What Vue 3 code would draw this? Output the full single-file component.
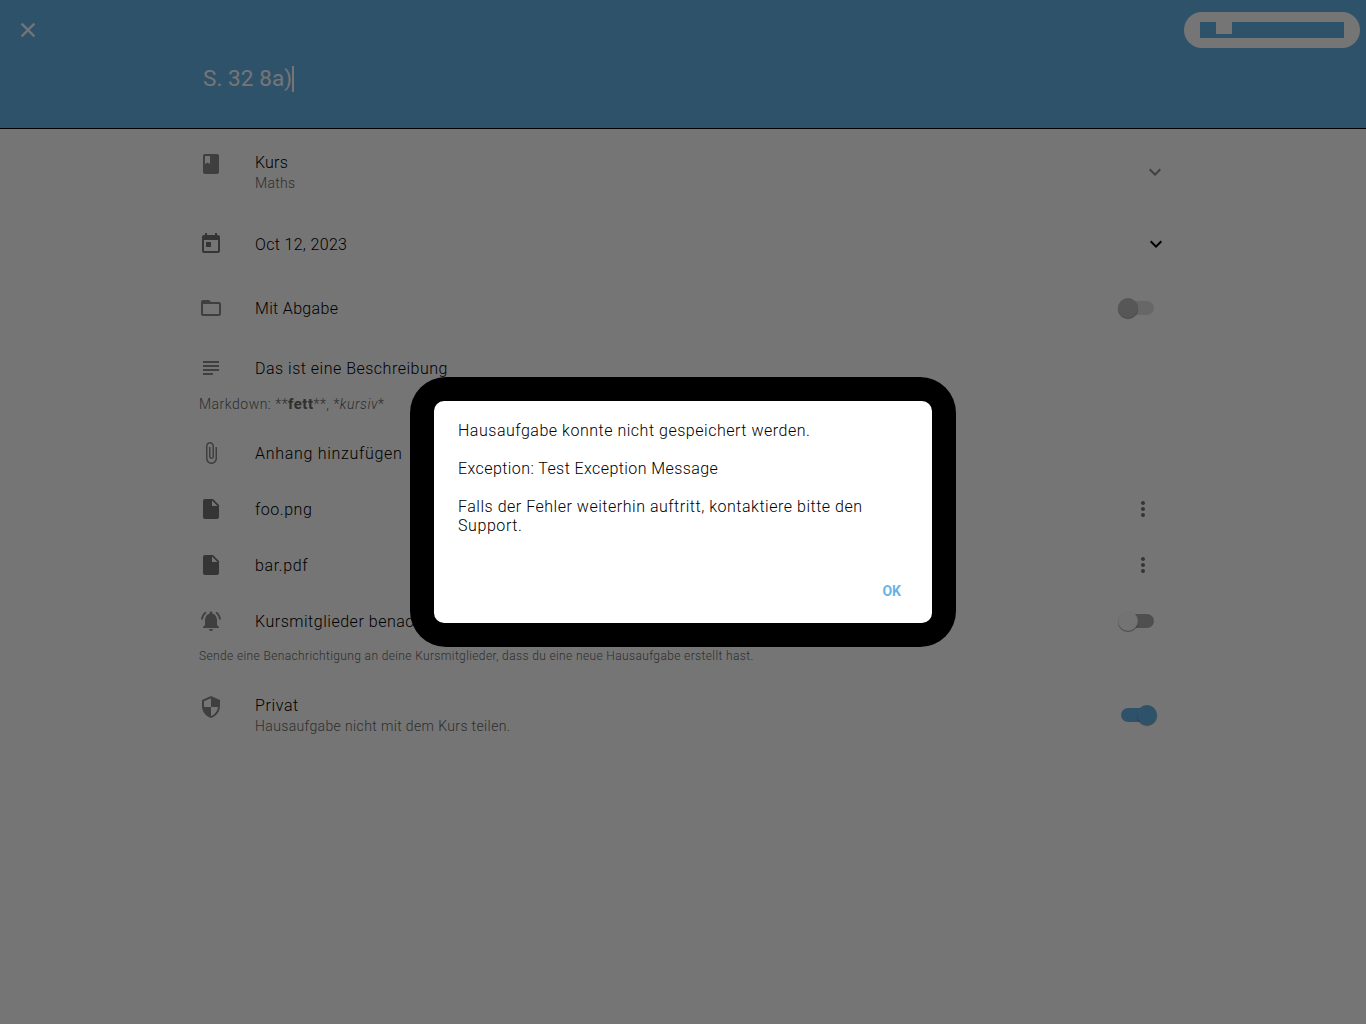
<script setup>
const icons = {
  book: 'M18 2H6c-1.1 0-2 .9-2 2v16c0 1.1.9 2 2 2h12c1.1 0 2-.9 2-2V4c0-1.1-.9-2-2-2zM6 4h5v8l-2.5-1.5L6 12V4z',
  today: 'M19 3h-1V1h-2v2H8V1H6v2H5c-1.11 0-1.99.9-1.99 2L3 19c0 1.1.89 2 2 2h14c1.1 0 2-.9 2-2V5c0-1.1-.9-2-2-2zm0 16H5V8h14v11zM7 10h5v5H7v-5z',
  folder: 'M20 6h-8l-2-2H4c-1.1 0-1.99.9-1.99 2L2 18c0 1.1.9 2 2 2h16c1.1 0 2-.9 2-2V8c0-1.1-.9-2-2-2zm0 12H4V8h16v10z',
  subject: 'M14 17H4v2h10v-2zm6-8H4v2h16V9zM4 15h16v-2H4v2zM4 5v2h16V5H4z',
  attach: 'M16.5 6v11.5c0 2.21-1.79 4-4 4s-4-1.79-4-4V5c0-1.38 1.12-2.5 2.5-2.5s2.5 1.12 2.5 2.5v10.5c0 .55-.45 1-1 1s-1-.45-1-1V6H10v9.5c0 1.38 1.12 2.5 2.5 2.5s2.5-1.12 2.5-2.5V5c0-2.21-1.79-4-4-4S7 2.79 7 5v12.5c0 3.04 2.46 5.5 5.5 5.5s5.5-2.46 5.5-5.5V6h-1.5z',
  file: 'M6 2c-1.1 0-1.99.9-1.99 2L4 20c0 1.1.89 2 1.99 2H18c1.1 0 2-.9 2-2V8l-6-6H6zm7 7V3.5L18.5 9H13z',
  bell: 'M7.58 4.08L6.15 2.65C3.75 4.48 2.17 7.3 2.03 10.5h2c.15-2.65 1.51-4.97 3.55-6.42zm12.39 6.42h2c-.15-3.2-1.73-6.02-4.12-7.85l-1.42 1.43c2.02 1.45 3.39 3.77 3.54 6.42zM18 11c0-3.07-1.64-5.64-4.5-6.32V4c0-.83-.67-1.5-1.5-1.5s-1.5.67-1.5 1.5v.68C7.63 5.36 6 7.92 6 11v5l-2 2v1h16v-1l-2-2v-5zm-6 11c.14 0 .27-.01.4-.04.65-.14 1.18-.58 1.44-1.18.1-.24.15-.5.15-.78h-4c.01 1.1.9 2 2.01 2z',
  shield: 'M12 1L3 5v6c0 5.55 3.84 10.74 9 12 5.16-1.26 9-6.45 9-12V5l-9-4zm0 10.99h7c-.53 4.12-3.28 7.79-7 8.94V12H5V6.3l7-3.11v8.8z',
  chevron: 'M7.41 8.59 12 13.17l4.59-4.58L18 10l-6 6-6-6z',
  more: 'M12 8c1.1 0 2-.9 2-2s-.9-2-2-2-2 .9-2 2 .9 2 2 2zm0 2c-1.1 0-2 .9-2 2s.9 2 2 2 2-.9 2-2-.9-2-2-2zm0 6c-1.1 0-2 .9-2 2s.9 2 2 2 2-.9 2-2-.9-2-2-2z',
  close: 'M19 6.41L17.59 5 12 10.59 6.41 5 5 6.41 10.59 12 5 17.59 6.41 19 12 13.41 17.59 19 19 17.59 13.41 12z',
}
const files = [
  { name: 'foo.png', cls: 't-foo' },
  { name: 'bar.pdf', cls: 't-bar' },
]
</script>

<template>
  <div class="page">
    <header class="bar">
      <div class="actions">
        <svg class="icon close" viewBox="0 0 24 24"><path :d="icons.close" /></svg>
        <div class="save">
          <i v-for="n in 9" :key="n" :class="{ low: n === 2 }"></i>
        </div>
      </div>
      <div class="title"><span class="t t-title">S. 32 8a)</span><span class="caret"></span></div>
    </header>

    <main class="form">
      <div class="row course">
        <svg class="icon" viewBox="0 0 24 24"><path :d="icons.book" /></svg>
        <div class="text">
          <div><span class="t t-kurs">Kurs</span></div>
          <div class="sub"><span class="t t-maths">Maths</span></div>
        </div>
        <svg class="icon chev light" viewBox="0 0 24 24"><path :d="icons.chevron" /></svg>
      </div>
      <div class="row date">
        <svg class="icon i-today" viewBox="0 0 24 24"><path :d="icons.today" /></svg>
        <div class="text"><span class="t t-date">Oct 12, 2023</span></div>
        <svg class="icon chev dark" viewBox="0 0 24 24"><path :d="icons.chevron" /></svg>
      </div>
      <div class="row">
        <svg class="icon" viewBox="0 0 24 24"><path :d="icons.folder" /></svg>
        <div class="text"><span class="t t-submit">Mit Abgabe</span></div>
        <div class="switch disabled"><b></b></div>
      </div>
      <div class="row desc">
        <svg class="icon" viewBox="0 0 24 24"><path :d="icons.subject" /></svg>
        <div class="text"><span class="t t-desc">Das ist eine Beschreibung</span></div>
      </div>
      <div class="hint markdown"><span class="t t-md">Markdown: **<strong>fett</strong>**, *<em>kursiv</em>*</span></div>
      <div class="row">
        <svg class="icon" viewBox="0 0 24 24"><path :d="icons.attach" /></svg>
        <div class="text"><span class="t t-attach">Anhang hinzufügen</span></div>
      </div>
      <div v-for="f in files" :key="f.name" class="row">
        <svg class="icon i-file" viewBox="0 0 24 24"><path :d="icons.file" /></svg>
        <div class="text"><span class="t" :class="f.cls">{{ f.name }}</span></div>
        <svg class="icon more" viewBox="0 0 24 24"><path :d="icons.more" /></svg>
      </div>
      <div class="row">
        <svg class="icon" viewBox="0 0 24 24"><path :d="icons.bell" /></svg>
        <div class="text"><span class="t t-notify">Kursmitglieder benachrichtigen</span></div>
        <div class="switch"><b></b></div>
      </div>
      <div class="hint notice"><span class="t t-notice">Sende eine Benachrichtigung an deine Kursmitglieder, dass du eine neue Hausaufgabe erstellt hast.</span></div>
      <div class="row private">
        <svg class="icon" viewBox="0 0 24 24"><path :d="icons.shield" /></svg>
        <div class="text">
          <div><span class="t t-private">Privat</span></div>
          <div class="sub"><span class="t t-share">Hausaufgabe nicht mit dem Kurs teilen.</span></div>
        </div>
        <div class="switch on"><b></b></div>
      </div>
    </main>

    <div class="scrim">
      <div class="frame">
        <div class="dialog">
          <p><span class="t t-d1">Hausaufgabe konnte nicht gespeichert werden.</span></p>
          <p><span class="t t-d2">Exception: Test Exception Message</span></p>
          <p><span class="t t-d3">Falls der Fehler weiterhin auftritt, kontaktiere bitte den</span><br /><span class="t t-d4">Support.</span></p>
          <div class="ok">OK</div>
        </div>
      </div>
    </div>
  </div>
</template>

<style>
body { margin: 0; }
</style>

<style scoped>
.page { position: relative; width: 1366px; height: 1024px; overflow: hidden; background: #fff; font: 300 16px/20px Roboto, sans-serif; color: #000; }
.t { white-space: nowrap; }
.bar { box-sizing: border-box; height: 129px; background: #68b4ea; border-bottom: 1px solid #000; }
.actions { display: flex; justify-content: space-between; align-items: center; height: 60px; padding: 0 6px 0 16px; }
.icon { flex: none; width: 24px; height: 24px; fill: #8a8a8a; }
.close { fill: #fff; stroke: #fff; stroke-width: .4; }
.save { display: flex; box-sizing: border-box; width: 176px; height: 36px; padding: 10px 16px; border-radius: 18px; background: #fff; }
.save i { width: 16px; height: 16px; background: #68b4ea; }
.save .low { height: 4px; margin-top: 12px; }
.title { display: flex; align-items: center; height: 38px; padding-left: 203px; font-size: 22.5px; font-weight: 400; color: #fff; }
.caret { width: 2px; height: 26px; background: #fff; }
.form { width: 969px; margin-left: 199px; }
.row { display: flex; align-items: center; height: 56px; }
.text { flex: 1; margin-left: 32px; padding-top: 2px; }
.sub { font-size: 14px; color: #666; }
.course, .private { align-items: flex-start; box-sizing: border-box; }
.course .text, .private .text { padding-top: 1px; }
.course { height: 79px; padding-top: 23px; }
.date { height: 72px; }
.desc { height: 60px; box-sizing: border-box; padding-top: 4px; }
.chev.light { margin: 8px 1px 0 0; }
.chev.dark { fill: #000; }
.more { margin-right: 13px; }
.hint { font-size: 14px; line-height: 16px; color: #666; }
.hint strong { font-weight: 700; font-size: 15px; line-height: 1; }
.markdown { height: 29px; }
.notice { height: 46px; font-size: 12px; line-height: 14px; }
.i-file, .i-today, .more { fill: #757575; }
.switch { position: relative; flex: none; width: 33px; height: 14px; margin-right: 14px; border-radius: 7px; background: #adadad; }
.switch b { position: absolute; left: -3px; top: -3px; width: 20px; height: 20px; border-radius: 50%; background: #fafafa; box-shadow: 0 1px 1px rgba(0, 0, 0, .4); }
.switch.disabled { background: #e0e0e0; }
.switch.disabled b { background: #bdbdbd; }
.switch.on { margin-top: 13px; background: #68b4ea; }
.switch.on b { left: 16px; background: #68b4ea; }
.scrim { position: absolute; inset: 0; display: flex; align-items: center; justify-content: center; background: rgba(0, 0, 0, .54); }
.frame { box-sizing: border-box; width: 546px; height: 270px; padding: 24px; border-radius: 36px; background: #000; }
.dialog { box-sizing: border-box; height: 222px; padding: 20px 24px 0; border-radius: 10px; background: #fff; line-height: 19px; color: #000; }
.dialog p { margin: 0 0 19px; }
.ok { margin: 47px 7px 0 0; text-align: right; font-size: 14px; font-weight: 700; color: #68b4ea; }

.t-title { padding-bottom: 1px; line-height: 21px; letter-spacing: .08px; }
.t-kurs { letter-spacing: .2px; }
.t-maths { letter-spacing: .28px; }
.t-date, .t-submit { letter-spacing: .33px; }
.t-desc { letter-spacing: .5px; }
.t-md { letter-spacing: .49px; }
.t-attach { letter-spacing: .7px; }
.t-foo { letter-spacing: .53px; }
.t-bar { letter-spacing: .64px; }
.t-notify { letter-spacing: .52px; }
.t-notice { letter-spacing: .37px; }
.t-private { letter-spacing: .62px; }
.t-share { letter-spacing: .37px; }
.t-d1, .t-d3 { letter-spacing: .52px; }
.t-d2 { letter-spacing: .42px; }
.t-d4 { letter-spacing: .58px; }
</style>
